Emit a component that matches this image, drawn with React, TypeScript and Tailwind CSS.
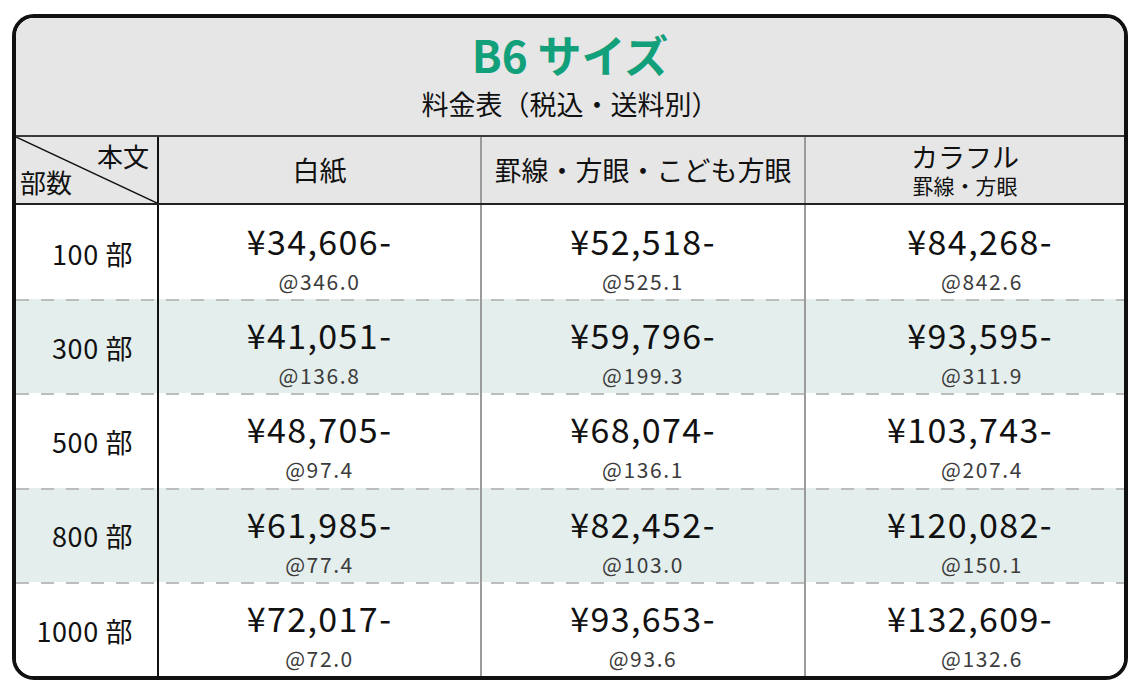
import React from 'react';

type Row = {
  label: string;
  shaded: boolean;
  cells: { price: string; unit: string }[];
};

const rows: Row[] = [
  {
    label: '100 部',
    shaded: false,
    cells: [
      { price: '¥34,606-', unit: '@346.0' },
      { price: '¥52,518-', unit: '@525.1' },
      { price: '¥84,268-', unit: '@842.6' },
    ],
  },
  {
    label: '300 部',
    shaded: true,
    cells: [
      { price: '¥41,051-', unit: '@136.8' },
      { price: '¥59,796-', unit: '@199.3' },
      { price: '¥93,595-', unit: '@311.9' },
    ],
  },
  {
    label: '500 部',
    shaded: false,
    cells: [
      { price: '¥48,705-', unit: '@97.4' },
      { price: '¥68,074-', unit: '@136.1' },
      { price: '¥103,743-', unit: '@207.4' },
    ],
  },
  {
    label: '800 部',
    shaded: true,
    cells: [
      { price: '¥61,985-', unit: '@77.4' },
      { price: '¥82,452-', unit: '@103.0' },
      { price: '¥120,082-', unit: '@150.1' },
    ],
  },
  {
    label: '1000 部',
    shaded: false,
    cells: [
      { price: '¥72,017-', unit: '@72.0' },
      { price: '¥93,653-', unit: '@93.6' },
      { price: '¥132,609-', unit: '@132.6' },
    ],
  },
];

const PriceCell = ({ price, unit, last }: { price: string; unit: string; last?: boolean }) => (
  <div className={`flex flex-col pt-[16px] ${last ? '' : 'border-r-2 border-[#9b9b9b]'}`}>
    <div
      className={`text-[34px] leading-[40px] tracking-[1.4px] text-[#111] ${
        last ? 'text-right pr-[71px]' : 'text-center'
      }`}
    >
      {price}
    </div>
    <div
      className={`text-[21px] leading-[36px] pt-[2px] tracking-[1.6px] text-[#3c3c3c] text-center ${
        last ? 'pl-[34px]' : ''
      }`}
    >
      {unit}
    </div>
  </div>
);

export default function App() {
  return (
    <div className="w-[1141px] h-[694px] bg-white pt-[14px] pl-[12px] font-['Noto_Sans_CJK_JP',sans-serif]">
      <div className="w-[1116px] h-[666px] border-4 border-[#111] rounded-[22px] overflow-hidden flex flex-col bg-white">
        {/* title */}
        <div className="h-[119px] shrink-0 bg-[#e6e6e6] border-b-2 border-[#3a3a3a] flex flex-col items-center">
          <div className="mt-[14px] text-[44px] leading-[44px] font-bold text-[#12a07a]">B6 サイズ</div>
          <div className="mt-[11px] text-[27px] leading-[34px] text-[#111]">料金表（税込・送料別）</div>
        </div>

        {/* column header */}
        <div className="h-[68px] shrink-0 bg-[#e6e6e6] border-b-2 border-[#222] grid grid-cols-[143px_323px_324px_1fr]">
          <div className="relative border-r-2 border-[#111]">
            <svg className="absolute inset-0 w-full h-full" viewBox="0 0 141 66" preserveAspectRatio="none">
              <line x1="0" y1="0" x2="141" y2="66" stroke="#111" strokeWidth="1.5" />
            </svg>
            <div className="absolute right-[8px] top-[4px] text-[26px] leading-[30px] text-[#111]">本文</div>
            <div className="absolute left-[4px] bottom-[6px] text-[26px] leading-[30px] text-[#111]">部数</div>
          </div>
          <div className="border-r-2 border-[#9b9b9b] flex items-center justify-center text-[27px] text-[#111]">
            白紙
          </div>
          <div className="border-r-2 border-[#9b9b9b] flex items-center justify-center text-[27px] text-[#111]">
            罫線・方眼・こども方眼
          </div>
          <div className="flex flex-col items-center justify-center text-[#111]">
            <div className="text-[27px] leading-[28px]">カラフル</div>
            <div className="mt-[2px] text-[21px] leading-[24px]">罫線・方眼</div>
          </div>
        </div>

        {/* body */}
        <div className="flex-1 flex flex-col">
          {rows.map((row, i) => (
            <div
              key={row.label}
              className={`flex-1 grid grid-cols-[143px_323px_324px_1fr] ${row.shaded ? 'bg-[#e4eeec]' : 'bg-white'} ${
                i > 0
                  ? 'bg-[repeating-linear-gradient(90deg,#bdbdbd_0px,#bdbdbd_13px,transparent_13px,transparent_25px)] bg-no-repeat bg-top bg-[length:100%_2px]'
                  : ''
              }`}
            >
              <div className="border-r-2 border-[#111] flex items-center justify-end pr-[24px] pt-[4px] text-[27px] tracking-[0.6px] text-[#111]">
                {row.label}
              </div>
              {row.cells.map((c, j) => (
                <PriceCell key={j} price={c.price} unit={c.unit} last={j === 2} />
              ))}
            </div>
          ))}
        </div>
      </div>
    </div>
  );
}
